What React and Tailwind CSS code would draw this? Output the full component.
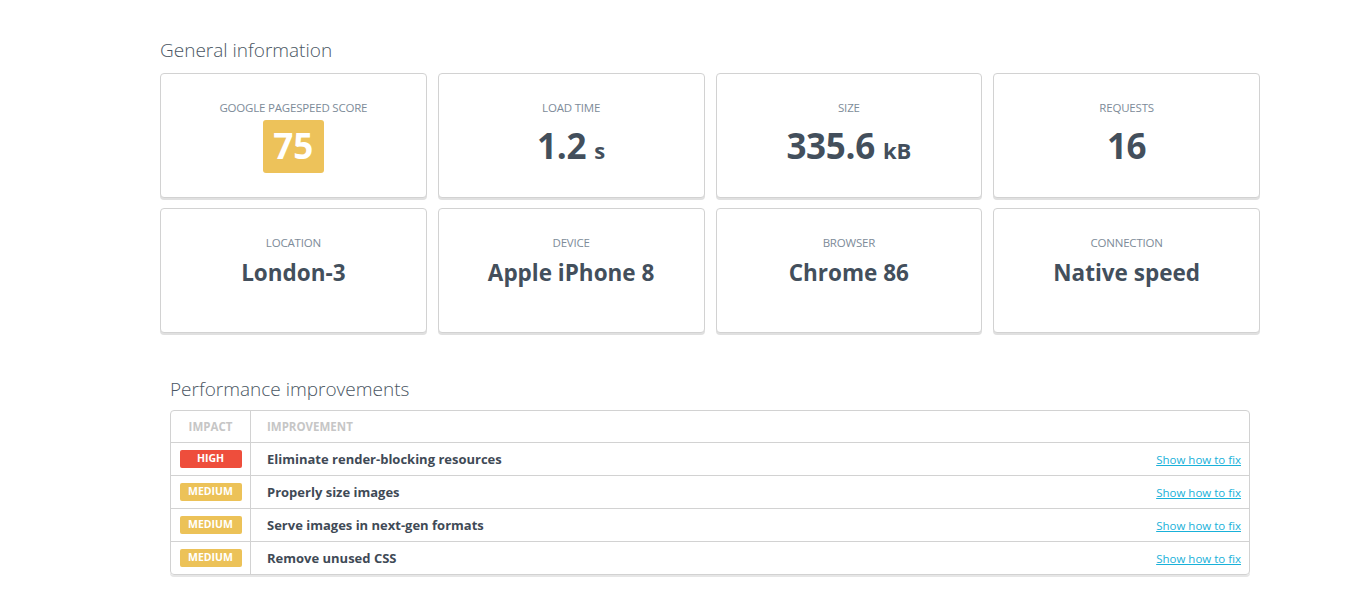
import React from "react";

const font = { fontFamily: '"Open Sans", "Noto Sans", "Liberation Sans", sans-serif' };

function Card({ label, children }) {
  return (
    <div className="h-[125px] rounded-[4px] border border-[#d2d2d2] bg-white shadow-[0_2px_0_#e0e0e0] flex flex-col items-center pt-[26px]">
      <div className="text-[11.5px] leading-[16px] uppercase text-[#7d8b99] tracking-[-0.2px]">{label}</div>
      {children}
    </div>
  );
}

function Big({ value, unit }) {
  return (
    <div className="mt-[4px] h-[53px] flex items-center text-[#434f5c] font-bold">
      <span className="text-[35px] tracking-[-0.3px]">{value}</span>
      {unit && <span className="text-[22px] ml-[8px] mt-[8px]">{unit}</span>}
    </div>
  );
}

function Medium({ value }) {
  return <div className="mt-[6px] text-[22.5px] leading-[32px] font-bold text-[#434f5c]">{value}</div>;
}

const rows = [
  { impact: "HIGH", color: "bg-[#ee4e3c]", text: "Eliminate render-blocking resources" },
  { impact: "MEDIUM", color: "bg-[#ecc258]", text: "Properly size images" },
  { impact: "MEDIUM", color: "bg-[#ecc258]", text: "Serve images in next-gen formats" },
  { impact: "MEDIUM", color: "bg-[#ecc258]", text: "Remove unused CSS" },
];

export default function App() {
  return (
    <div className="bg-white min-h-[609px] w-[1356px]" style={font}>
      <div className="ml-[160px] w-[1100px] pt-[36px]">
        <h2 className="text-[19px] leading-[28px] font-light text-[#4a5663] mb-[9px]">General information</h2>
        <div className="grid grid-cols-4 gap-x-[11px] gap-y-[10px]">
          <Card label="Google PageSpeed Score">
            <div className="mt-[4px] w-[61px] h-[53px] rounded-[3px] bg-[#edc25a] flex items-center justify-center text-white font-bold text-[35px]">75</div>
          </Card>
          <Card label="Load time"><Big value="1.2" unit="s" /></Card>
          <Card label="Size"><Big value="335.6" unit="kB" /></Card>
          <Card label="Requests"><Big value="16" /></Card>
          <Card label="Location"><Medium value="London-3" /></Card>
          <Card label="Device"><Medium value="Apple iPhone 8" /></Card>
          <Card label="Browser"><Medium value="Chrome 86" /></Card>
          <Card label="Connection"><Medium value="Native speed" /></Card>
        </div>

        <div className="mx-[10px] mt-[42px]">
          <h2 className="text-[19px] leading-[28px] font-light text-[#4a5663] mb-[7px]">Performance improvements</h2>
          <div className="rounded-[4px] border border-[#d2d2d2] shadow-[0_2px_0_#e6e6e6] overflow-hidden">
            <div className="flex h-[32px] items-center border-b border-[#d2d2d2]">
              <div className="w-[80px] h-full flex items-center justify-center border-r border-[#d2d2d2] text-[11.5px] font-bold text-[#c6c6c6]">IMPACT</div>
              <div className="pl-[16px] text-[11.5px] font-bold text-[#c6c6c6]">IMPROVEMENT</div>
            </div>
            {rows.map((r, i) => (
              <div key={i} className={`flex items-center ${i < rows.length - 1 ? "h-[33px] border-b border-[#d2d2d2]" : "h-[32px]"}`}>
                <div className="w-[80px] h-full flex items-center justify-center border-r border-[#d2d2d2]">
                  <span className={`${r.color} w-[62px] h-[18px] rounded-[2px] flex items-center justify-center text-white text-[10.5px] font-bold`}>{r.impact}</span>
                </div>
                <div className="flex-1 pl-[16px] pt-[2px] text-[13px] font-bold text-[#3f4a56]">{r.text}</div>
                <a href="#" className="pr-[8px] pt-[2px] text-[11.5px] text-[#19b1d9] underline">Show how to fix</a>
              </div>
            ))}
          </div>
        </div>
      </div>
    </div>
  );
}
